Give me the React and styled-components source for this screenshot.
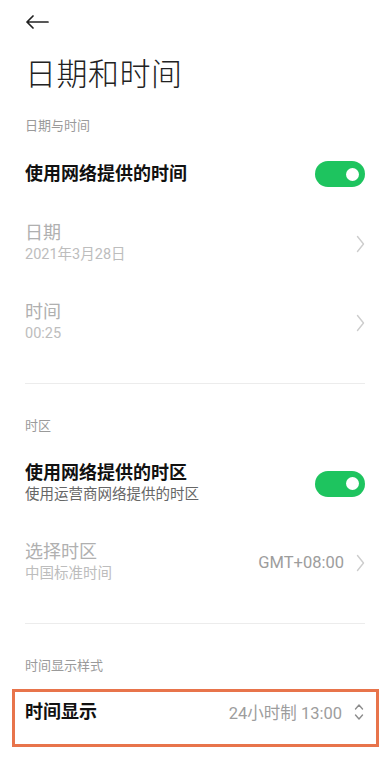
import React from 'react'
import styled, { createGlobalStyle } from 'styled-components'

const Global = createGlobalStyle`
    body {
        margin: 0;
        background: #fff;
        font-family: Roboto, "Noto Sans CJK SC", "Noto Sans", sans-serif;
    }
`;

const Page = styled.div`
    width: 390px;
    min-height: 760px;
    background: #fff;
`;

const TopBar = styled.div`
    height: 44px;
    display: flex;
    align-items: center;
    padding: 0 25px;
`;

const Title = styled.h1`
    margin: 0;
    height: 60px;
    padding: 11px 25px 0;
    box-sizing: border-box;
    font-size: 31px;
    line-height: 40px;
    font-weight: 300;
    color: #222;
    letter-spacing: 0.5px;
`;

const SectionLabel = styled.div`
    height: 40px;
    display: flex;
    align-items: center;
    padding: 0 25px;
    font-size: 13px;
    color: #9a9a9a;
`;

const Row = styled.div`
    height: ${p => p.h}px;
    display: flex;
    align-items: center;
    justify-content: space-between;
    padding: 0 25px;
    box-sizing: border-box;
`;

const Texts = styled.div`
    display: flex;
    flex-direction: column;
    padding-bottom: 2px;
`;

const RowTitle = styled.div`
    font-size: 18px;
    line-height: 24px;
    font-weight: ${p => (p.disabled ? 400 : 700)};
    color: ${p => (p.disabled ? '#b0b0b0' : '#111')};
`;

const RowSub = styled.div`
    font-size: 14.5px;
    line-height: 20px;
    color: ${p => (p.disabled ? '#bdbdbd' : '#666')};
`;

const Right = styled.div`
    display: flex;
    align-items: center;
    gap: 12px;
`;

const Value = styled.span`
    font-size: 16.5px;
    color: #9d9d9d;
`;

const Toggle = styled.div`
    width: 50px;
    height: 26px;
    border-radius: 13px;
    background: #1ec45f;
    display: flex;
    align-items: center;
    justify-content: flex-end;
    padding-right: 6px;
    box-sizing: border-box;
    &::after {
        content: '';
        width: 13px;
        height: 13px;
        border-radius: 50%;
        background: #fff;
    }
`;

const Divider = styled.div`
    height: 1px;
    background: #ececec;
    margin: 21px 25px 20px;
`;

const Highlight = styled.div`
    margin: 5px 11px 0 12px;
    border: 3px solid #e8744b;
    height: 58px;
    box-sizing: border-box;
    display: flex;
    justify-content: space-between;
    align-items: flex-start;
    padding: 8px 12px 0 10px;
`;

const BackIcon = () => (
    <svg width="24" height="14" viewBox="0 0 24 14" fill="none">
        <path d="M23 7H2M8 1L2 7l6 6" stroke="#222" strokeWidth="1.7" strokeLinecap="round" strokeLinejoin="round" />
    </svg>
);

const Chevron = () => (
    <svg width="9" height="18" viewBox="0 0 9 18" fill="none">
        <path d="M1.5 1.5L7.5 9l-6 7.5" stroke="#cdcdcd" strokeWidth="1.4" strokeLinecap="round" strokeLinejoin="round" />
    </svg>
);

const UpDown = () => (
    <svg width="10" height="20" viewBox="0 0 10 20" fill="none">
        <path d="M1.5 7L5 3l3.5 4M1.5 13L5 17l3.5-4" stroke="#8c8c8c" strokeWidth="1.4" strokeLinecap="round" strokeLinejoin="round" />
    </svg>
);

const App = () => {
    return (
        <>
            <Global />
            <Page>
                <TopBar>
                    <BackIcon />
                </TopBar>
                <Title>日期和时间</Title>

                <SectionLabel>日期与时间</SectionLabel>
                <Row h={60}>
                    <RowTitle>使用网络提供的时间</RowTitle>
                    <Toggle />
                </Row>
                <Row h={79}>
                    <Texts>
                        <RowTitle disabled>日期</RowTitle>
                        <RowSub disabled>2021年3月28日</RowSub>
                    </Texts>
                    <Chevron />
                </Row>
                <Row h={79}>
                    <Texts>
                        <RowTitle disabled>时间</RowTitle>
                        <RowSub disabled>00:25</RowSub>
                    </Texts>
                    <Chevron />
                </Row>

                <Divider />

                <SectionLabel>时区</SectionLabel>
                <Row h={79}>
                    <Texts>
                        <RowTitle>使用网络提供的时区</RowTitle>
                        <RowSub>使用运营商网络提供的时区</RowSub>
                    </Texts>
                    <Toggle />
                </Row>
                <Row h={79}>
                    <Texts>
                        <RowTitle disabled>选择时区</RowTitle>
                        <RowSub disabled>中国标准时间</RowSub>
                    </Texts>
                    <Right>
                        <Value>GMT+08:00</Value>
                        <Chevron />
                    </Right>
                </Row>

                <Divider />

                <SectionLabel>时间显示样式</SectionLabel>
                <Highlight>
                    <RowTitle>时间显示</RowTitle>
                    <Right>
                        <Value>24小时制 13:00</Value>
                        <UpDown />
                    </Right>
                </Highlight>
            </Page>
        </>
    )
}

export default App
